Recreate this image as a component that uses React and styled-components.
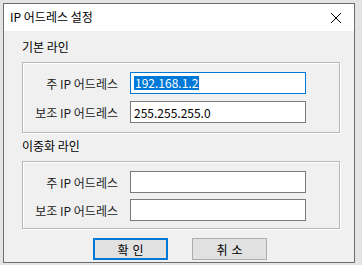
import React from 'react';
import styled, { createGlobalStyle } from 'styled-components';

const Global = createGlobalStyle`
  html, body {
    margin: 0;
    padding: 0;
    background: #e4e4e4;
  }
  body {
    font-family: "Noto Sans CJK KR", "Noto Sans", sans-serif;
    font-size: 12px;
    color: #000;
  }
`;

const Window = styled.div`
  margin: 3px 0 0 3px;
  width: 350px;
  height: 258px;
  border: 1px solid #6d6d6d;
  background: #f0f0f0;
  display: flex;
  flex-direction: column;
`;

const TitleBar = styled.div`
  height: 27px;
  background: #fff;
  display: flex;
  align-items: center;
  justify-content: space-between;
  padding: 0 6px 0 6px;
`;

const Title = styled.span`
  font-size: 12px;
  line-height: 16px;
  margin-top: -1px;
`;

const Body = styled.div`
  flex: 1;
  display: flex;
  flex-direction: column;
  padding: 8px 14px 0 18px;
`;

const SectionLabel = styled.div`
  font-size: 12px;
  line-height: 16px;
  margin-bottom: ${p => p.$gap}px;
  margin-top: ${p => p.$top || 0}px;
`;

const GroupBox = styled.div`
  border: 1px solid #b9b9b9;
  box-shadow: inset 1px 1px 0 #fff, 1px 1px 0 #fff;
  padding: 9px 0 ${p => p.$bottom}px 0;
  display: flex;
  flex-direction: column;
  gap: ${p => p.$gap}px;
`;

const Row = styled.div`
  display: flex;
  align-items: center;
  height: 22px;
`;

const Label = styled.span`
  width: 95px;
  text-align: right;
  font-size: 12px;
  margin-right: 12px;
  color: #1a1a1a;
`;

const Field = styled.div`
  box-sizing: border-box;
  width: 176px;
  height: 22px;
  background: #fff;
  border: 1px solid ${p => (p.$focused ? '#0078d7' : '#7a7a7a')};
  display: flex;
  align-items: center;
  padding-left: 3px;
  font-size: 12px;
`;

const Selected = styled.span`
  background: #0078d7;
  color: #fff;
  line-height: 14px;
  padding: 0 1px;
`;

const Buttons = styled.div`
  display: flex;
  justify-content: center;
  gap: 24px;
  margin-top: 9px;
  padding-right: 2px;
`;

const Button = styled.button`
  box-sizing: border-box;
  width: 75px;
  height: 22px;
  background: #e1e1e1;
  border: ${p => (p.$primary ? '2px solid #0078d7' : '1px solid #adadad')};
  font-family: inherit;
  font-size: 12px;
  letter-spacing: 4px;
  padding: 0 0 0 4px;
  color: #000;
`;

const Close = () => (
  <svg width="12" height="12" viewBox="0 0 12 12" style={{ marginRight: 6 }}>
    <path d="M1 1 L11 11 M11 1 L1 11" stroke="#000" strokeWidth="1" fill="none" />
  </svg>
);

const IpRow = ({ label, value, focused, selected }) => (
  <Row>
    <Label>{label}</Label>
    <Field $focused={focused}>
      {selected ? <Selected>{value}</Selected> : value}
    </Field>
  </Row>
);

export default function App() {
  return (
    <>
      <Global />
      <Window>
        <TitleBar>
          <Title>IP 어드레스 설정</Title>
          <Close />
        </TitleBar>
        <Body>
          <SectionLabel $gap={7}>기본 라인</SectionLabel>
          <GroupBox $gap={7} $bottom={9}>
            <IpRow label="주 IP 어드레스" value="192.168.1.2" focused selected />
            <IpRow label="보조 IP 어드레스" value="255.255.255.0" />
          </GroupBox>
          <SectionLabel $gap={7} $top={5}>이중화 라인</SectionLabel>
          <GroupBox $gap={6} $bottom={7}>
            <IpRow label="주 IP 어드레스" value="" />
            <IpRow label="보조 IP 어드레스" value="" />
          </GroupBox>
          <Buttons>
            <Button $primary>확인</Button>
            <Button>취소</Button>
          </Buttons>
        </Body>
      </Window>
    </>
  );
}
